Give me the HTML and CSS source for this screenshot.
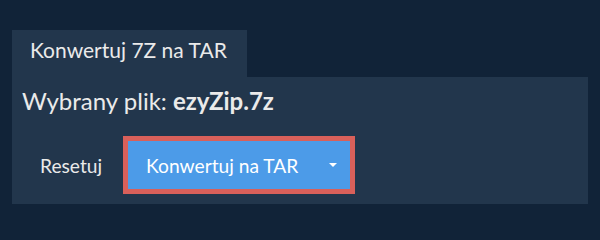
FILE: index.html
```html
<!DOCTYPE html>
<html lang="pl">
<head>
<meta charset="utf-8">
<link rel="stylesheet" href="styles.css">
</head>
<body>
<div class="page">
  <div class="tabs">
    <div class="tab">Konwertuj 7Z na TAR</div>
  </div>
  <div class="panel">
    <div class="file">Wybrany plik: <b>ezyZip.7z</b></div>
    <div class="actions">
      <button class="reset">Resetuj</button>
      <div class="convert-wrap">
        <button class="convert">
          <span class="label">Konwertuj na TAR</span>
          <span class="caret"></span>
        </button>
      </div>
    </div>
  </div>
</div>
</body>
</html>
```

FILE: styles.css
```css
html, body {
  margin: 0;
  padding: 0;
  background: #112338;
  font-family: Lato, "Open Sans", sans-serif;
  color: #eaeaea;
}
.page {
  padding: 30px 12px 0 12px;
  height: 230px;
  box-sizing: border-box;
  overflow: hidden;
}
.tabs {
  display: flex;
}
.tab {
  width: 235px;
  height: 47px;
  box-sizing: border-box;
  background: #22364c;
  padding: 7px 0 0 18px;
  font-size: 21px;
  line-height: 26px;
}
.panel {
  background: #22364c;
  height: 127px;
  box-sizing: border-box;
  padding: 10px 10px 0 10px;
}
.file {
  font-size: 24px;
  line-height: 28px;
}
.file b {
  font-weight: 700;
}
.actions {
  display: flex;
  align-items: center;
  margin-top: 21px;
}
.reset {
  background: none;
  border: none;
  color: #eaeaea;
  font-family: inherit;
  font-size: 19.2px;
  padding: 0 21px 0 18px;
  height: 48px;
}
.convert-wrap {
  border: 5px solid #d9605a;
}
.convert {
  display: flex;
  align-items: center;
  width: 222px;
  height: 48px;
  background: #4c9be8;
  border: none;
  color: #ffffff;
  font-family: inherit;
  font-size: 19.2px;
  padding: 0 13px 0 18px;
  box-sizing: border-box;
}
.label {
  flex: 1;
  text-align: left;
}
.caret {
  width: 0;
  height: 0;
  border-left: 4px solid transparent;
  border-right: 4px solid transparent;
  border-top: 4px solid #ffffff;
}
```
